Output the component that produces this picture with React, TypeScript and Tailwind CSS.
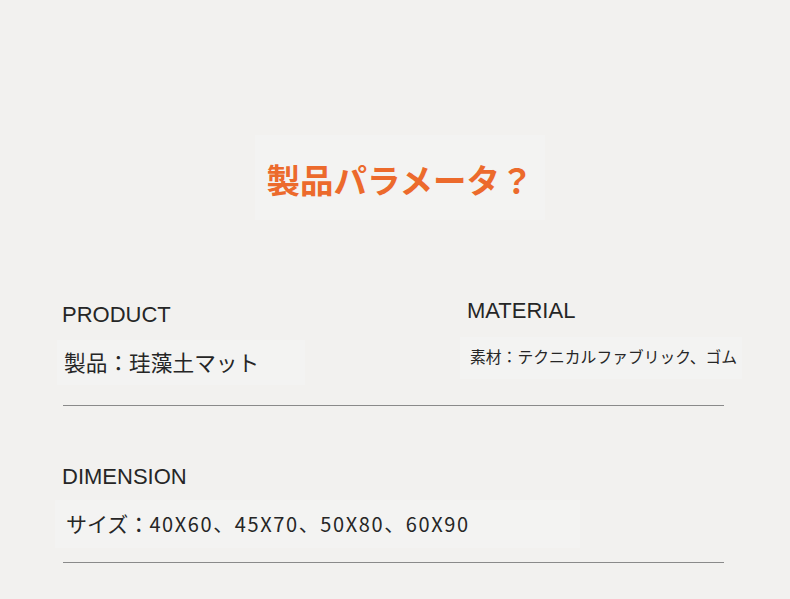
import React from 'react';

const latin = { fontFamily: '"Liberation Sans", Arial, sans-serif' };
const cjk = { fontFamily: '"Noto Sans CJK JP", "Noto Sans", sans-serif' };

export default function App() {
  return (
    <div className="w-[790px] h-[599px] overflow-hidden bg-[#f2f1ef] text-[#262626]">
      {/* title */}
      <div className="pt-[135px] flex justify-center pl-[10px]">
        <div className="w-[290px] h-[85px] bg-[#f3f3f2] pt-[23px] flex justify-center">
          <h1 style={cjk} className="text-[33.5px] leading-[42px] font-bold text-[#ec6a2c] whitespace-nowrap">
            製品パラメータ？
          </h1>
        </div>
      </div>

      {/* product / material */}
      <div className="mt-[78px] px-[62px]">
        <div className="flex">
          <div className="w-[405px] shrink-0 pt-[4px]">
            <div style={latin} className="text-[22px] leading-[26px]">PRODUCT</div>
            <div className="mt-[12px] -ml-[5px] w-[248px] bg-[#f3f3f2] pl-[7px] pt-[9px] pb-[10px]">
              <div style={cjk} className="text-[21.7px] leading-[26px] text-[#262626]">製品：珪藻土マット</div>
            </div>
          </div>
          <div className="shrink-0">
            <div style={latin} className="text-[22px] leading-[26px]">MATERIAL</div>
            <div className="mt-[13px] -ml-[7px] w-[282px] bg-[#f3f3f2] pl-[10px] pt-[10px] pb-[12px]">
              <div style={cjk} className="text-[15.8px] leading-[20px] text-[#262626] whitespace-nowrap">
                素材：テクニカルファブリック、ゴム
              </div>
            </div>
          </div>
        </div>
        <div className="mt-[20px] ml-[1px] w-[661px] h-px bg-[#8a8a8a]" />

        {/* dimension */}
        <div style={latin} className="mt-[58px] text-[22px] leading-[26px]">DIMENSION</div>
        <div className="mt-[10px] -ml-[7px] w-[525px] bg-[#f3f3f2] pl-[11px] pt-[11px] pb-[12px]">
          <div style={cjk} className="text-[21px] leading-[24px] text-[#262626] whitespace-nowrap">
            サイズ：<span className="text-[20px] tracking-[1.6px]">40X60、45X70、50X80、60X90</span>
          </div>
        </div>
        <div className="mt-[14px] ml-[1px] w-[661px] h-px bg-[#8a8a8a]" />
      </div>
    </div>
  );
}
